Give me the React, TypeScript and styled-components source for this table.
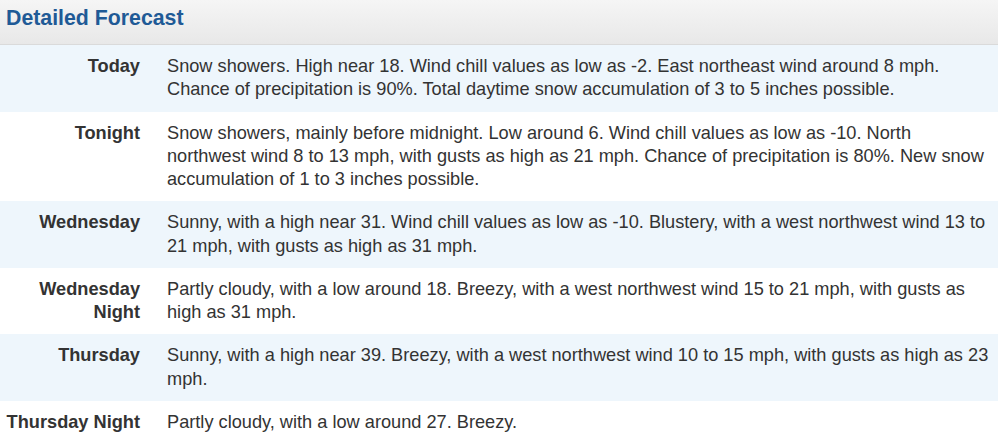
import React from "react";
import styled, { createGlobalStyle } from "styled-components";

const Global = createGlobalStyle`
  html, body { margin: 0; padding: 0; background: #fff; }
  body { font-family: "Liberation Sans", Arial, Helvetica, sans-serif; }
`;

const Panel = styled.section`
  width: 998px;
  background: #fff;
`;

const Header = styled.div`
  height: 45px;
  box-sizing: border-box;
  padding: 6px 6px 0;
  background: linear-gradient(to bottom, #f5f5f5 0%, #e8e8e8 100%);
  border-bottom: 1px solid #dadada;
`;

const Title = styled.h3`
  margin: 0;
  font-size: 21.3px;
  line-height: 25px;
  font-weight: bold;
  color: #1f5a96;
`;

const Row = styled.div<{ $alt: boolean }>`
  display: grid;
  grid-template-columns: 140px 1fr;
  column-gap: 27px;
  padding: 10px 6px 10px 0;
  background: ${(p) => (p.$alt ? "#eef6fc" : "#ffffff")};
  font-size: 18.2px;
  line-height: 23.25px;
  color: #333333;
`;

const Label = styled.div`
  text-align: right;
  font-weight: bold;
`;

const Text = styled.div``;

const data: [string, string][] = [
  ["Today", "Snow showers. High near 18. Wind chill values as low as -2. East northeast wind around 8 mph. Chance of precipitation is 90%. Total daytime snow accumulation of 3 to 5 inches possible."],
  ["Tonight", "Snow showers, mainly before midnight. Low around 6. Wind chill values as low as -10. North northwest wind 8 to 13 mph, with gusts as high as 21 mph. Chance of precipitation is 80%. New snow accumulation of 1 to 3 inches possible."],
  ["Wednesday", "Sunny, with a high near 31. Wind chill values as low as -10. Blustery, with a west northwest wind 13 to 21 mph, with gusts as high as 31 mph."],
  ["Wednesday Night", "Partly cloudy, with a low around 18. Breezy, with a west northwest wind 15 to 21 mph, with gusts as high as 31 mph."],
  ["Thursday", "Sunny, with a high near 39. Breezy, with a west northwest wind 10 to 15 mph, with gusts as high as 23 mph."],
  ["Thursday Night", "Partly cloudy, with a low around 27. Breezy."],
];

export default function App() {
  return (
    <Panel>
      <Global />
      <Header>
        <Title>Detailed Forecast</Title>
      </Header>
      {data.map(([label, text], i) => (
        <Row key={label} $alt={i % 2 === 0}>
          <Label>{label}</Label>
          <Text>{text}</Text>
        </Row>
      ))}
    </Panel>
  );
}
